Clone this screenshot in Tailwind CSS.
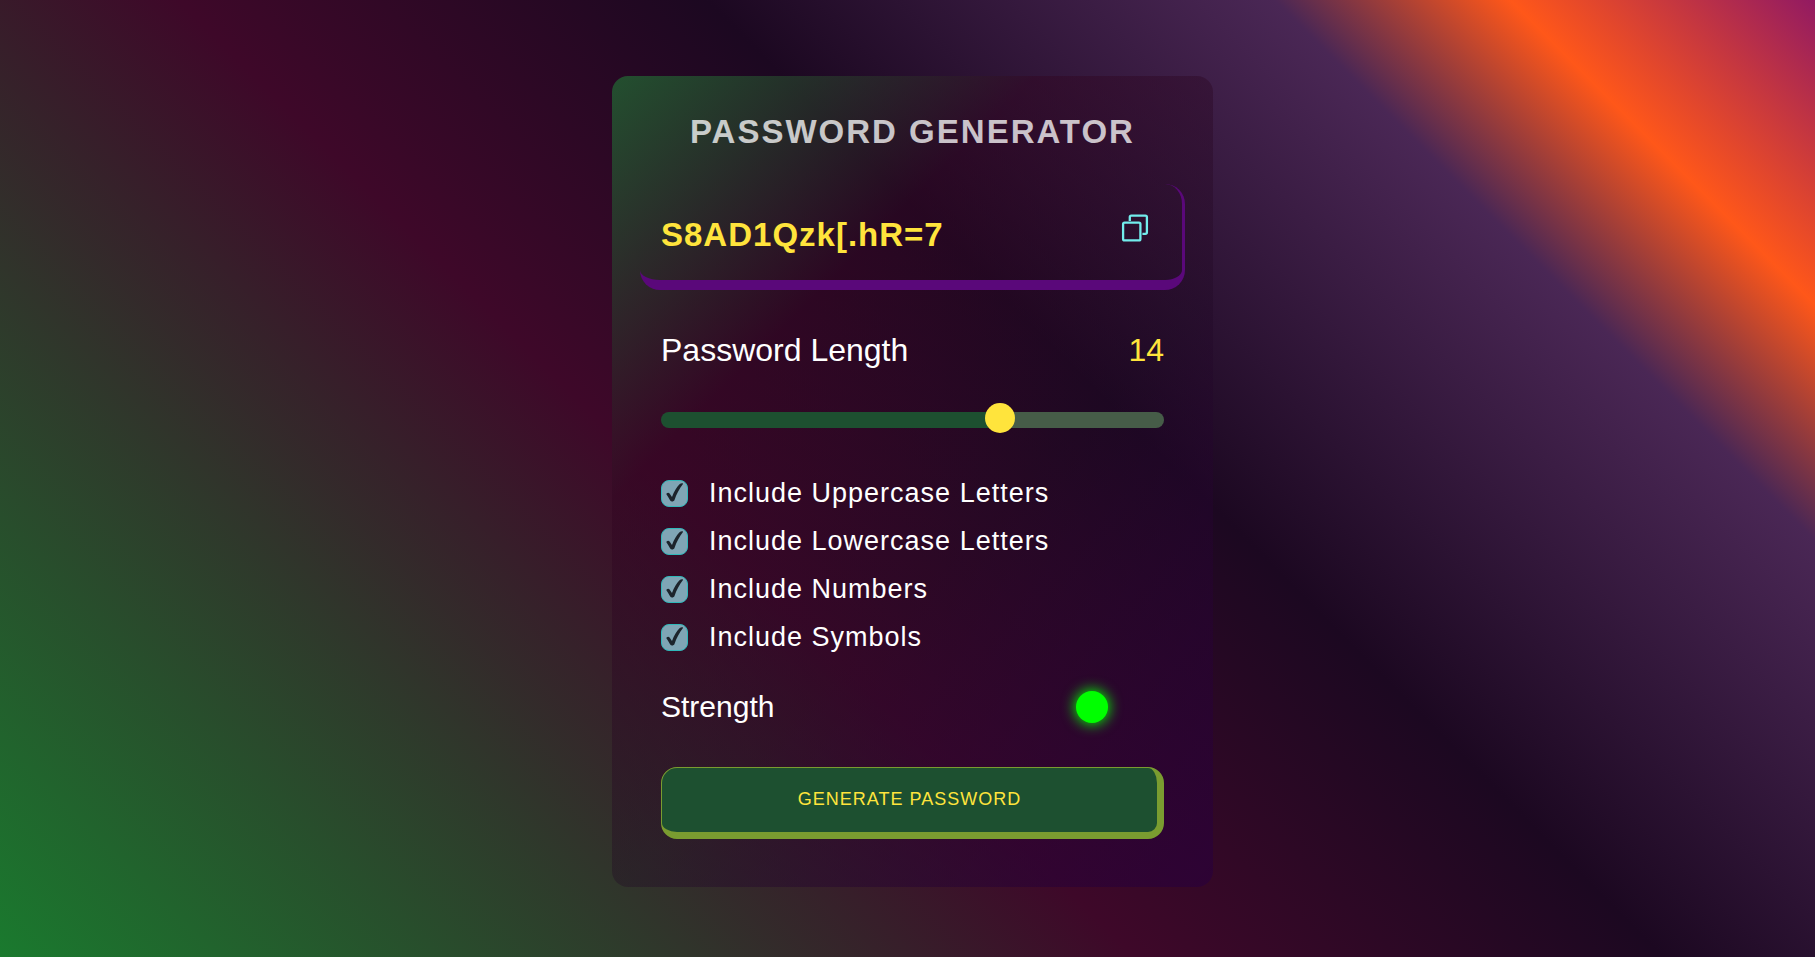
<!DOCTYPE html>
<html lang="en">
<head>
<meta charset="utf-8">
<meta name="viewport" content="width=device-width, initial-scale=1">
<title>Password Generator</title>
<script src="https://cdn.jsdelivr.net/npm/@tailwindcss/browser@4"></script>
</head>
<body class="min-h-screen bg-[linear-gradient(45deg,#1a7a2e_0%,#3e0829_41%,#1c0821_60%,#4a2755_80.5%,#ff5719_89%,#921a62_100%)] bg-fixed font-['Liberation_Sans',Arial,sans-serif] text-white">
<main class="flex min-h-screen items-center justify-center pt-1.5 pl-[10px]">
  <form class="w-full max-w-[601px] rounded-2xl bg-[linear-gradient(135deg,rgba(34,97,50,0.8)_0%,rgba(50,6,34,0.5)_30%,rgba(32,8,36,0.35)_58%,rgba(42,0,58,0.7)_100%)] px-7 pt-9 pb-12">
    <h1 class="text-center text-[33px] leading-10 font-bold tracking-[2px] text-white/75 uppercase">Password Generator</h1>

    <div class="mt-8 flex h-[106px] items-center justify-between rounded-[20px] border-r-[3px] border-b-[10px] border-[#5a087a] pr-8 pl-[21px]">
      <output class="mt-1.5 text-[33px] leading-10 font-bold tracking-[1px] text-[#ffe43c]">S8AD1Qzk[.hR=7</output>
      <button type="button" aria-label="Copy password" class="mb-2 cursor-pointer text-[#72ecec]">
        <svg class="size-8" viewBox="0 0 32 32" fill="none" stroke="currentColor" stroke-width="2.3" stroke-linejoin="round">
          <rect x="5.100" y="10.600" width="17.300" height="17.800" rx="1.500"/>
          <path d="M11.800 9V5.100a1.500 1.500 0 0 1 1.500-1.500h14.100a1.500 1.500 0 0 1 1.500 1.500v15.200a1.500 1.500 0 0 1-1.500 1.500h-3"/>
        </svg>
      </button>
    </div>

    <div class="pr-[21px] pl-[21px]">
      <div class="mt-10 flex items-center justify-between text-[32px] leading-10">
        <label for="length">Password Length</label>
        <output for="length" class="text-[#ffe43c]">14</output>
      </div>
      <input id="length" type="range" min="1" max="20" value="14" class="mt-[42px] block h-4 w-full cursor-pointer appearance-none rounded-lg bg-[linear-gradient(90deg,#1d5030_68%,#465c48_68%)] [&::-webkit-slider-thumb]:mt-[-4px] [&::-webkit-slider-thumb]:size-[30px] [&::-webkit-slider-thumb]:appearance-none [&::-webkit-slider-thumb]:rounded-full [&::-webkit-slider-thumb]:bg-[#ffe43c]">

      <div class="mt-[41px] flex flex-col text-[27px] leading-[48px] tracking-[1px]">
        <label class="flex h-12 items-center gap-[21px]">
          <span class="grid size-[27px] place-items-center">
            <input type="checkbox" checked class="col-start-1 row-start-1 size-[27px] appearance-none rounded-lg border border-[#2fb8ba] bg-[#7fa5b5]">
            <svg class="pointer-events-none col-start-1 row-start-1 size-[27px]" viewBox="0 0 27 27" fill="#1c242c"><path d="M5.500 14.500C5 13 7.500 12 8.600 13.500L11 17C13 11.500 15.500 7 18.500 4.200C19.800 3 22.500 3 22 4C18.500 8.500 15.500 14 13.500 20C12.800 21.800 10 22 9.200 20.500C8 18.300 7 16.500 5.500 14.500Z"/></svg>
          </span>
          Include Uppercase Letters
        </label>
        <label class="flex h-12 items-center gap-[21px]">
          <span class="grid size-[27px] place-items-center">
            <input type="checkbox" checked class="col-start-1 row-start-1 size-[27px] appearance-none rounded-lg border border-[#2fb8ba] bg-[#7fa5b5]">
            <svg class="pointer-events-none col-start-1 row-start-1 size-[27px]" viewBox="0 0 27 27" fill="#1c242c"><path d="M5.500 14.500C5 13 7.500 12 8.600 13.500L11 17C13 11.500 15.500 7 18.500 4.200C19.800 3 22.500 3 22 4C18.500 8.500 15.500 14 13.500 20C12.800 21.800 10 22 9.200 20.500C8 18.300 7 16.500 5.500 14.500Z"/></svg>
          </span>
          Include Lowercase Letters
        </label>
        <label class="flex h-12 items-center gap-[21px]">
          <span class="grid size-[27px] place-items-center">
            <input type="checkbox" checked class="col-start-1 row-start-1 size-[27px] appearance-none rounded-lg border border-[#2fb8ba] bg-[#7fa5b5]">
            <svg class="pointer-events-none col-start-1 row-start-1 size-[27px]" viewBox="0 0 27 27" fill="#1c242c"><path d="M5.500 14.500C5 13 7.500 12 8.600 13.500L11 17C13 11.500 15.500 7 18.500 4.200C19.800 3 22.500 3 22 4C18.500 8.500 15.500 14 13.500 20C12.800 21.800 10 22 9.200 20.500C8 18.300 7 16.500 5.500 14.500Z"/></svg>
          </span>
          Include Numbers
        </label>
        <label class="flex h-12 items-center gap-[21px]">
          <span class="grid size-[27px] place-items-center">
            <input type="checkbox" checked class="col-start-1 row-start-1 size-[27px] appearance-none rounded-lg border border-[#2fb8ba] bg-[#7fa5b5]">
            <svg class="pointer-events-none col-start-1 row-start-1 size-[27px]" viewBox="0 0 27 27" fill="#1c242c"><path d="M5.500 14.500C5 13 7.500 12 8.600 13.500L11 17C13 11.500 15.500 7 18.500 4.200C19.800 3 22.500 3 22 4C18.500 8.500 15.500 14 13.500 20C12.800 21.800 10 22 9.200 20.500C8 18.300 7 16.500 5.500 14.500Z"/></svg>
          </span>
          Include Symbols
        </label>
      </div>

      <div class="mt-[26px] flex items-center justify-between pr-14">
        <p class="text-[30px] leading-10">Strength</p>
        <span role="img" aria-label="Strong" class="size-8 rounded-full bg-[#00ff00] shadow-[0_0_14px_1px_#00ff00]"></span>
      </div>

      <button type="button" class="mt-10 block h-[72px] w-full cursor-pointer rounded-2xl border border-r-[7px] border-b-[7px] border-[#7a9c30] bg-[#1d5030] pb-0.5 text-lg leading-6 tracking-[1px] text-[#ffe43c] uppercase">Generate Password</button>
    </div>
  </form>
</main>
</body>
</html>
